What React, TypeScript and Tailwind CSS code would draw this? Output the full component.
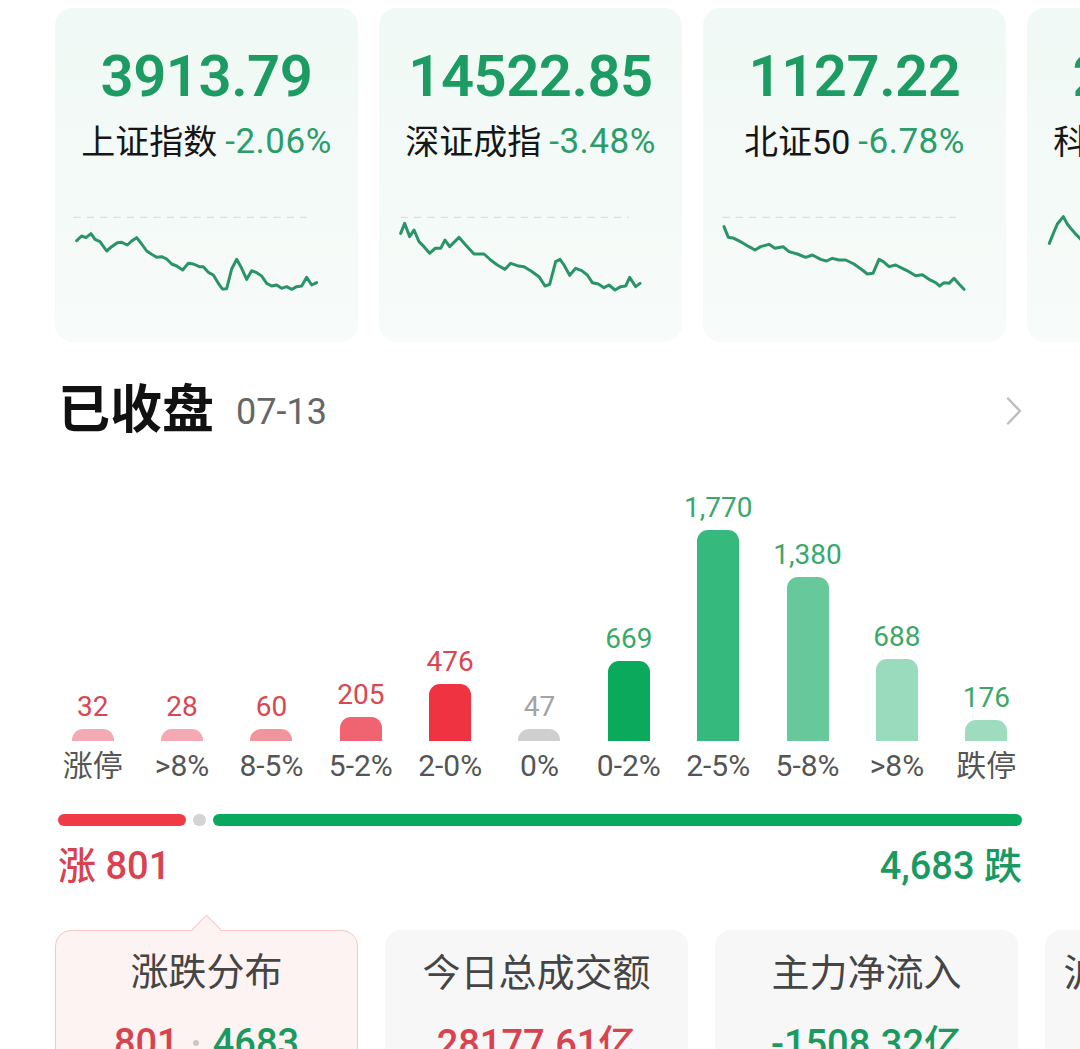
import { ReactNode } from "react";

type Index = {
  value: string;
  name: ReactNode;
  pct: string;
  box: string;
  line: string;
  dash?: [number, number, number];
};

// sparkline coordinates are in a 3x grid, each card sets its own viewBox
const indices: Index[] = [
  {
    value: "3913.79",
    name: "上证指数",
    pct: "-2.06%",
    box: "90 69 780 270",
    dash: [100, 800, 82],
    line:
      "110,152 125,138 138,143 153,131 165,148 180,155 200,183 215,170 232,158 245,157 262,165 275,153 290,143 305,162 320,183 335,193 350,202 365,200 380,207 395,222 410,228 428,240 445,220 460,222 478,230 490,230 505,247 520,255 535,280 547,297 560,296 575,237 590,208 605,235 620,268 635,242 650,248 665,258 680,280 695,288 710,285 725,295 740,290 755,298 770,290 785,288 800,262 815,285 830,278",
  },
  {
    value: "14522.85",
    name: "深证成指",
    pct: "-3.48%",
    box: "105 639 780 270",
    dash: [125, 810, 652],
    line:
      "125,700 137,670 152,710 165,690 180,725 195,740 212,760 228,745 245,745 258,720 272,740 300,712 320,735 345,762 375,762 395,780 415,795 438,808 455,790 475,797 495,800 515,812 540,830 558,858 572,853 590,785 603,778 615,795 632,826 650,805 668,812 685,825 700,848 718,852 735,863 750,855 768,870 785,860 800,858 812,832 830,860 843,850",
  },
  {
    value: "1127.22",
    name: (
      <>
        北证<span>50</span>
      </>
    ),
    pct: "-6.78%",
    box: "87 639 780 270",
    dash: [100, 800, 652],
    line:
      "105,680 118,712 135,715 160,728 180,740 198,750 215,740 240,733 258,745 282,740 300,755 325,762 350,772 370,765 395,778 412,783 430,775 450,780 470,780 495,792 520,810 535,822 552,820 570,778 583,785 600,800 620,795 640,805 660,815 680,827 700,824 720,838 740,848 752,858 765,848 780,850 795,835 810,852 825,868",
  },
  {
    value: "2436.58",
    name: "科创综指",
    pct: "-4.12%",
    box: "246 639 780 270",
    line: "268,730 280,700 292,672 310,650 322,672 332,685 345,700 360,715 375,735 390,742 410,748",
  },
];

const bars = [
  { v: "32", n: 32, label: "涨停", bar: "bg-[#f4aab3]", text: "text-[#d9474f]" },
  { v: "28", n: 28, label: ">8%", bar: "bg-[#f4aab4]", text: "text-[#d9474f]" },
  { v: "60", n: 60, label: "8-5%", bar: "bg-[#f0949d]", text: "text-[#d9474f]" },
  { v: "205", n: 205, label: "5-2%", bar: "bg-[#ef6470]", text: "text-[#d9474f]" },
  { v: "476", n: 476, label: "2-0%", bar: "bg-[#f03341]", text: "text-[#d9474f]" },
  { v: "47", n: 47, label: "0%", bar: "bg-[#cfcfcf]", text: "text-[#a3a3a3]" },
  { v: "669", n: 669, label: "0-2%", bar: "bg-[#0ba95b]", text: "text-[#3aa868]" },
  { v: "1,770", n: 1770, label: "2-5%", bar: "bg-[#36b97d]", text: "text-[#3aa868]" },
  { v: "1,380", n: 1380, label: "5-8%", bar: "bg-[#67c99b]", text: "text-[#3aa868]" },
  { v: "688", n: 688, label: ">8%", bar: "bg-[#99dbbc]", text: "text-[#3aa868]" },
  { v: "176", n: 176, label: "跌停", bar: "bg-[#9fdbbf]", text: "text-[#3aa868]" },
];

function Spark({ box, line, dash }: { box: string; line: string; dash?: [number, number, number] }) {
  return (
    <svg width="260" height="90" viewBox={box} className="ml-[15px] mt-[51px] self-start">
      {dash && (
        <line
          x1={dash[0]}
          x2={dash[1]}
          y1={dash[2]}
          y2={dash[2]}
          stroke="#dedede"
          strokeWidth="4"
          strokeDasharray="22 18"
        />
      )}
      <polyline
        points={line}
        fill="none"
        stroke="#2a9468"
        strokeWidth="9"
        strokeLinejoin="round"
        strokeLinecap="round"
      />
    </svg>
  );
}

function IndexCard({ item }: { item: Index }) {
  return (
    <div className="w-[303px] h-[334px] shrink-0 rounded-[18px] bg-gradient-to-b from-[#f0f9f5] to-[#f7fbf9] flex flex-col items-center pt-[39px]">
      <div className="text-[58px] leading-none font-semibold text-[#1c9b62] tracking-[-0.5px]">{item.value}</div>
      <div className="mt-[17px] h-[40px] flex items-center gap-[8px] text-[34px] whitespace-nowrap">
        <span className="text-[#161616]">{item.name}</span>
        <span className="text-[35px] tracking-[0.5px] text-[#2a9d6a]">{item.pct}</span>
      </div>
      <Spark box={item.box} line={item.line} dash={item.dash} />
    </div>
  );
}

function StatCard({ title, active, children }: { title: string; active?: boolean; children: ReactNode }) {
  return (
    <div
      className={
        active
          ? "relative w-[303px] h-[200px] shrink-0 rounded-[16px] border-[1.5px] border-[#f3c9c2] bg-[#fdf3f2] flex flex-col items-center pt-[18px]"
          : "relative w-[303px] h-[200px] shrink-0 rounded-[16px] bg-[#f7f7f7] flex flex-col items-center pt-[20px]"
      }
    >
      {active && (
        <div className="absolute left-[140px] top-[-12px] w-[21px] h-[21px] rotate-45 border-l-[1.5px] border-t-[1.5px] border-[#f3c9c2] bg-[#fdf3f2]" />
      )}
      <div className="relative text-[38px] leading-[46px] text-[#454545] whitespace-nowrap">{title}</div>
      <div className="mt-[29px] text-[38px] leading-none font-medium whitespace-nowrap flex items-center">{children}</div>
    </div>
  );
}

export default function App() {
  return (
    <div className="w-[1080px] h-[1049px] overflow-hidden bg-white font-[Roboto,'Noto_Sans_CJK_SC',sans-serif]">
      {/* index cards */}
      <div className="flex gap-[21px] pl-[55px] pt-[8px]">
        {indices.map((it, i) => (
          <IndexCard key={i} item={it} />
        ))}
      </div>

      {/* session header */}
      <div className="mt-[39px] h-[60px] px-[58px] flex items-center">
        <span className="text-[52px] font-bold text-[#111] leading-none">已收盘</span>
        <span className="ml-[22px] text-[36px] text-[#666] leading-none mt-[2px]">07-13</span>
        <svg width="16" height="28" viewBox="0 0 16 28" className="ml-auto">
          <polyline points="2,1.5 14,14 2,26.5" fill="none" stroke="#bdbdbd" strokeWidth="2.4" strokeLinecap="round" strokeLinejoin="round" />
        </svg>
      </div>

      {/* distribution bars */}
      <div className="ml-[48px] w-[983px] h-[300px] grid grid-cols-11 items-end">
        {bars.map((b) => (
          <div key={b.label + b.v} className="flex flex-col items-center">
            <span className={"text-[28px] leading-none mb-[8px] " + b.text}>{b.v}</span>
            <div
              className={"w-[42px] rounded-t-[11px] " + b.bar}
              style={{ height: Math.max(12, Math.round(b.n * 0.1192)) }}
            />
          </div>
        ))}
      </div>
      <div className="ml-[48px] mt-[7px] w-[983px] grid grid-cols-11">
        {bars.map((b) => (
          <div key={"l" + b.label + b.v} className="text-center text-[30px] leading-[36px] text-[#555]">
            {b.label}
          </div>
        ))}
      </div>

      {/* up / down ratio */}
      <div className="mt-[30px] mx-[58px] h-[12px] flex gap-[7px]">
        <div className="w-[128px] rounded-full bg-[#f03a46]" />
        <div className="w-[13px] rounded-full bg-[#d3d3d3]" />
        <div className="flex-1 rounded-full bg-[#0aa85e]" />
      </div>
      <div className="mt-[20px] mx-[58px] h-[40px] flex items-center justify-between text-[38px] font-medium">
        <span className="text-[#d8434f]">涨 801</span>
        <span className="text-[#1a9a60]">4,683 跌</span>
      </div>

      {/* summary cards */}
      <div className="mt-[44px] pl-[55px] flex gap-[27px]">
        <StatCard title="涨跌分布" active>
          <span className="text-[#d8434f]">801</span>
          <span className="mx-[14px] w-[6px] h-[6px] rounded-full bg-[#c8c8c8]" />
          <span className="text-[#1a9a60]">4683</span>
        </StatCard>
        <StatCard title="今日总成交额">
          <span className="text-[#d8434f]">28177.61亿</span>
        </StatCard>
        <StatCard title="主力净流入">
          <span className="text-[#1a9a60]">-1508.32亿</span>
        </StatCard>
        <StatCard title="沪深港通净流入">
          <span className="text-[#d8434f]">126.85亿</span>
        </StatCard>
      </div>
    </div>
  );
}
